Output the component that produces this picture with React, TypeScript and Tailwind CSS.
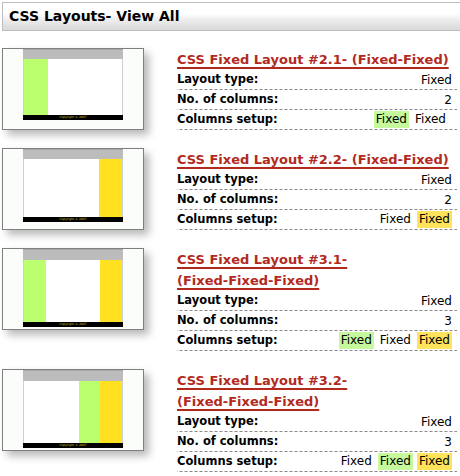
import React from 'react';

type Col = { color: string; width: number; align: 'left' | 'right' };

interface Layout {
  title: string[];
  columns: number;
  setup: { label: string; hl?: 'green' | 'yellow' }[];
  thumb: { cols: Col[]; bodyH: number; headH: number; extraRight?: boolean };
}

const layouts: Layout[] = [
  {
    title: ['CSS Fixed Layout #2.1- (Fixed-Fixed)'],
    columns: 2,
    setup: [{ label: 'Fixed', hl: 'green' }, { label: 'Fixed' }],
    thumb: { cols: [{ color: '#bcff6e', width: 24, align: 'left' }], bodyH: 56, headH: 10, extraRight: true },
  },
  {
    title: ['CSS Fixed Layout #2.2- (Fixed-Fixed)'],
    columns: 2,
    setup: [{ label: 'Fixed' }, { label: 'Fixed', hl: 'yellow' }],
    thumb: { cols: [{ color: '#ffe122', width: 23, align: 'right' }], bodyH: 58, headH: 10 },
  },
  {
    title: ['CSS Fixed Layout #3.1-', '(Fixed-Fixed-Fixed)'],
    columns: 3,
    setup: [{ label: 'Fixed', hl: 'green' }, { label: 'Fixed' }, { label: 'Fixed', hl: 'yellow' }],
    thumb: {
      cols: [
        { color: '#bcff6e', width: 22, align: 'left' },
        { color: '#ffe122', width: 22, align: 'right' },
      ],
      bodyH: 62,
      headH: 11,
    },
  },
  {
    title: ['CSS Fixed Layout #3.2-', '(Fixed-Fixed-Fixed)'],
    columns: 3,
    setup: [{ label: 'Fixed' }, { label: 'Fixed', hl: 'green' }, { label: 'Fixed', hl: 'yellow' }],
    thumb: {
      cols: [
        { color: '#bcff6e', width: 21, align: 'right' },
        { color: '#ffe122', width: 22, align: 'right' },
      ],
      bodyH: 62,
      headH: 11,
    },
  },
];

const Thumb: React.FC<{ t: Layout['thumb'] }> = ({ t }) => {
  const left = t.cols.filter(c => c.align === 'left');
  const right = t.cols.filter(c => c.align === 'right');
  return (
    <div className="w-[142px] h-[82px] border border-[#7f7f7f] bg-[#fbfdfb] pl-[20px] shadow-[5px_5px_8px_rgba(0,0,0,0.28)]">
      <div className="w-[100px] flex flex-col">
        <div className="bg-[#bcbcbc] border-t border-[#a8a8a8]" style={{ height: t.headH }} />
        <div className="flex bg-white border-x border-[#cfcfcf]" style={{ height: t.bodyH }}>
          {left.map((c, i) => (
            <div key={i} style={{ width: c.width, background: c.color }} />
          ))}
          <div className="flex-1" />
          {right.map((c, i) => (
            <div key={i} style={{ width: c.width, background: c.color }} />
          ))}
        </div>
        <div className="h-[5px] bg-black flex items-center justify-center overflow-hidden">
          <span className="text-[3px] leading-[3px] text-[#c8c040] whitespace-nowrap">Copyright © 2007</span>
        </div>
      </div>
    </div>
  );
};

const dashed =
  'bg-[linear-gradient(to_right,#8a8a8a_3px,transparent_3px)] bg-[length:5px_1px] bg-repeat-x bg-bottom';

const Row: React.FC<{ label: string; children: React.ReactNode }> = ({ label, children }) => (
  <div className={`h-[20px] pb-[1px] flex items-center justify-between ${dashed}`}>
    <span className="text-[11.5px] font-bold text-black">{label}</span>
    <span className="text-[12px] text-black pr-[5px] flex items-center">{children}</span>
  </div>
);

export default function App() {
  return (
    <div className="w-[460px] h-[476px] overflow-hidden bg-white font-['DejaVu_Sans',sans-serif] pt-[2px]">
      <div className="ml-[2px] mr-[-10px] h-[29px] border border-[#bdbdbd] bg-[linear-gradient(to_bottom,#ffffff_0%,#ffffff_40%,#eeeeee_60%,#d9d9d9_100%)] pl-[6px] pt-[5px]">
        <h1 className="text-[14px] leading-[16px] font-bold text-black">CSS Layouts- View All</h1>
      </div>
      <div className="mt-[17px]">
        {layouts.map((l, i) => (
          <div key={i} className="flex pl-[2px] mb-[18px]">
            <div className="w-[175px] shrink-0">
              <Thumb t={l.thumb} />
            </div>
            <div className="w-[280px]">
              <div className="pt-[1px] text-[13px] leading-[21px] font-bold text-[#b22a1e]">
                {l.title.map((line, j) => (
                  <div key={j}>
                    <span className="underline decoration-[2px] underline-offset-[3px]">{line}</span>
                  </div>
                ))}
              </div>
              <Row label="Layout type:">Fixed</Row>
              <Row label="No. of columns:">{l.columns}</Row>
              <Row label="Columns setup:">
                <span className={`flex items-center gap-[4px] ${l.thumb.extraRight ? 'pr-[4px]' : ''}`}>
                  {l.setup.map((s, k) => (
                    <span
                      key={k}
                      className={`inline-block px-[2px] leading-[17px] ${
                        s.hl === 'green' ? 'bg-[#c6f89c]' : s.hl === 'yellow' ? 'bg-[#ffe35a]' : ''
                      }`}
                    >
                      {s.label}
                    </span>
                  ))}
                </span>
              </Row>
            </div>
          </div>
        ))}
      </div>
    </div>
  );
}
